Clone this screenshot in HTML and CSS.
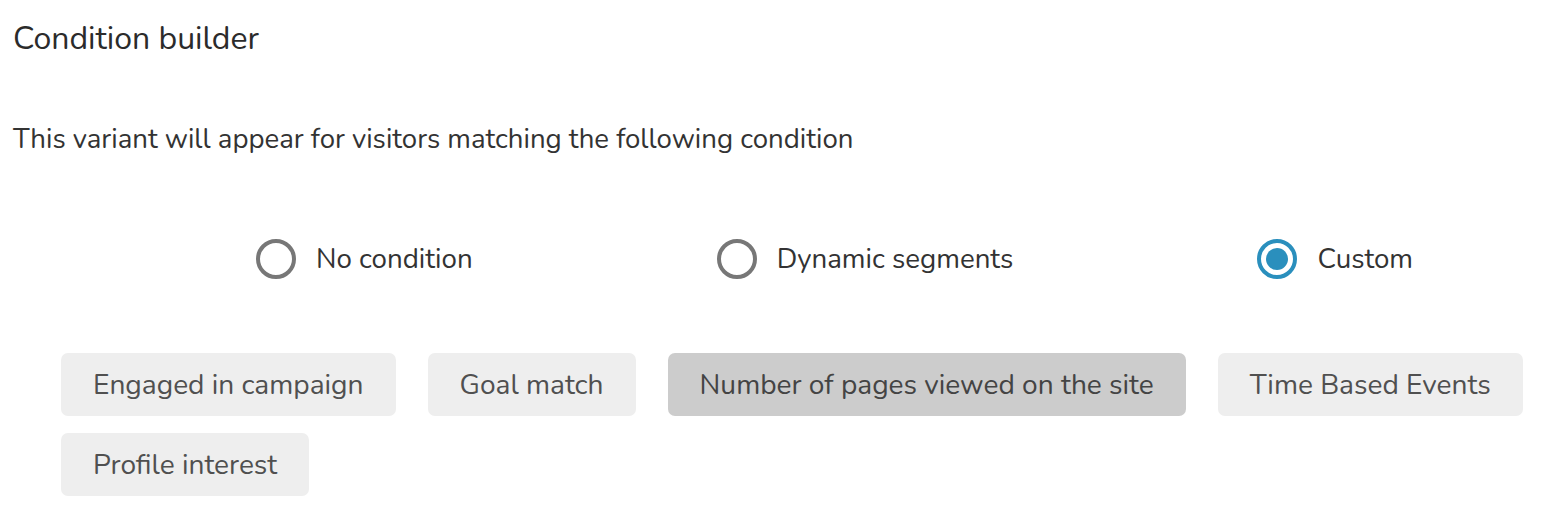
FILE: index.html
```html
<!DOCTYPE html>
<html>
<head>
<meta charset="utf-8">
<link rel="stylesheet" href="styles.css">
</head>
<body>
<div class="page">
  <h2 class="title">Condition builder</h2>
  <p class="desc">This variant will appear for visitors matching the following condition</p>
  <div class="radios">
    <label class="radio"><span class="dot"></span><span class="lbl">No condition</span></label>
    <label class="radio"><span class="dot"></span><span class="lbl">Dynamic segments</span></label>
    <label class="radio checked"><span class="dot"></span><span class="lbl">Custom</span></label>
  </div>
  <div class="chips">
    <button class="chip">Engaged in campaign</button>
    <button class="chip">Goal match</button>
    <button class="chip active">Number of pages viewed on the site</button>
    <button class="chip">Time Based Events</button>
    <button class="chip">Profile interest</button>
  </div>
</div>
</body>
</html>
```
FILE: styles.css
```css
html, body {
  margin: 0;
  padding: 0;
  background: #fff;
}
body {
  font-family: Nunito, "Open Sans", sans-serif;
  color: #333;
}
.page {
  padding: 17px 13px 0 13px;
}
.title {
  margin: 0;
  font-size: 32px;
  font-weight: 400;
  line-height: 44px;
  color: #2b2b2b;
}
.desc {
  margin: 60px 0 0 0;
  font-size: 27.6px;
  line-height: 36px;
  color: #333;
}
.radios {
  display: flex;
  align-items: center;
  gap: 244px;
  margin: 82px 0 0 0;
  padding-left: 243px;
  height: 40px;
}
.radio {
  display: flex;
  align-items: center;
  gap: 20px;
  font-size: 27.7px;
  line-height: 36px;
  color: #333;
}
.dot {
  box-sizing: border-box;
  width: 40px;
  height: 40px;
  border: 4px solid #777;
  border-radius: 50%;
  display: flex;
  align-items: center;
  justify-content: center;
}
.checked .dot {
  border-color: #2a8fbd;
}
.checked .dot::after {
  content: "";
  width: 22px;
  height: 22px;
  border-radius: 50%;
  background: #2a8fbd;
}
.chips {
  display: flex;
  flex-wrap: wrap;
  column-gap: 32px;
  row-gap: 17px;
  margin: 74px 0 0 48px;
}
.chip {
  font-family: inherit;
  font-size: 28.1px;
  font-weight: 400;
  height: 63px;
  padding: 0 32px;
  border: none;
  border-radius: 7px;
  background: #eeeeee;
  color: #505050;
}
.chip.active {
  background: #cccccc;
  color: #444;
}
```
